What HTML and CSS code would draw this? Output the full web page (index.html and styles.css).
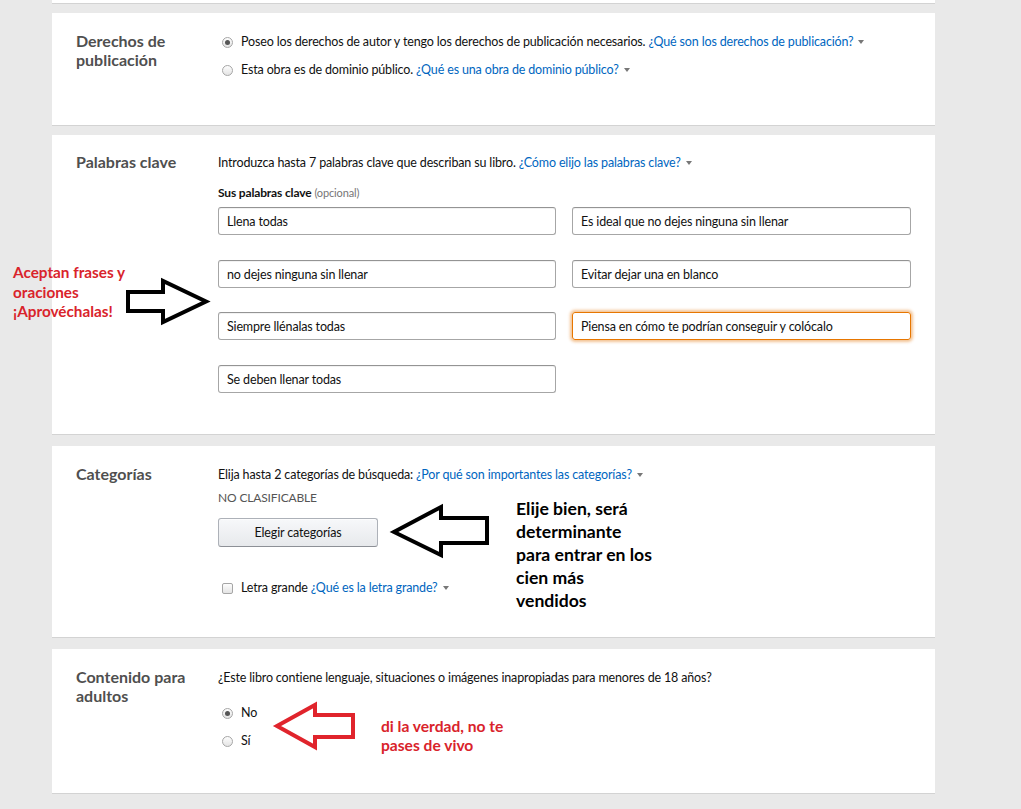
FILE: index.html
```html
<!DOCTYPE html>
<html lang="es">
<head>
<meta charset="utf-8">
<title>Detalles del libro</title>
<link rel="stylesheet" href="styles.css">
</head>
<body>
<div class="page">
  <div class="card stub"></div>

  <section class="card rights">
    <h2 class="label">Derechos de publicación</h2>
    <div class="content">
      <div class="choice"><span class="radio checked"></span><span>Poseo los derechos de autor y tengo los derechos de publicación necesarios. <a class="link">¿Qué son los derechos de publicación?</a><span class="caret"></span></span></div>
      <div class="choice gap8"><span class="radio"></span><span>Esta obra es de dominio público. <a class="link">¿Qué es una obra de dominio público?</a><span class="caret"></span></span></div>
    </div>
  </section>

  <section class="card keywords">
    <h2 class="label">Palabras clave</h2>
    <div class="content">
      <div class="line">Introduzca hasta 7 palabras clave que describan su libro. <a class="link">¿Cómo elijo las palabras clave?</a><span class="caret"></span></div>
      <div class="line sub"><b>Sus palabras clave</b> <span class="muted">(opcional)</span></div>
      <div class="kw-grid">
        <div class="input">Llena todas</div>
        <div class="input">Es ideal que no dejes ninguna sin llenar</div>
        <div class="input">no dejes ninguna sin llenar</div>
        <div class="input">Evitar dejar una en blanco</div>
        <div class="input">Siempre llénalas todas</div>
        <div class="input focus">Piensa en cómo te podrían conseguir y colócalo</div>
        <div class="input">Se deben llenar todas</div>
      </div>
    </div>
  </section>

  <section class="card categories">
    <h2 class="label">Categorías</h2>
    <div class="content">
      <div class="line">Elija hasta 2 categorías de búsqueda: <a class="link">¿Por qué son importantes las categorías?</a><span class="caret"></span></div>
      <div class="line muted-up">NO CLASIFICABLE</div>
      <button class="btn" type="button">Elegir categorías</button>
      <div class="choice large"><span class="check"></span><span>Letra grande <a class="link">¿Qué es la letra grande?</a><span class="caret"></span></span></div>
    </div>
  </section>

  <section class="card adult">
    <h2 class="label">Contenido para adultos</h2>
    <div class="content">
      <div class="line">¿Este libro contiene lenguaje, situaciones o imágenes inapropiadas para menores de 18 años?</div>
      <div class="choice no"><span class="radio checked"></span><span>No</span></div>
      <div class="choice gap8"><span class="radio"></span><span>Sí</span></div>
    </div>
  </section>

  <svg class="overlay" width="1021" height="809" viewBox="0 0 1021 809" aria-hidden="true">
    <polygon points="128,292 163,292 163,281 206,301.5 163,322 163,311 128,311" fill="none" stroke="#000" stroke-width="4" stroke-linejoin="miter"/>
    <polygon points="487,518 441,518 441,507 394,532 441,555 441,543 487,543" fill="none" stroke="#000" stroke-width="4" stroke-linejoin="miter"/>
    <polygon points="353,715 315,715 315,705 277,726 315,747 315,737 353,737" fill="none" stroke="#e0242c" stroke-width="4" stroke-linejoin="miter"/>
  </svg>

  <div class="note note-red note-kw">Aceptan frases y<br>oraciones<br>¡Aprovéchalas!</div>
  <div class="note note-black note-cat">Elije bien, será<br>determinante<br>para entrar en los<br>cien más<br>vendidos</div>
  <div class="note note-red note-adult">di la verdad, no te<br>pases de vivo</div>
</div>
</body>
</html>
```

FILE: styles.css
```css
html, body {
  margin: 0;
  padding: 0;
}
body {
  background: #e9e9e9;
  font-family: Lato, "Liberation Sans", Arial, sans-serif;
  font-size: 12.5px;
  letter-spacing: -0.15px;
  color: #111;
  width: 1021px;
  height: 809px;
  overflow: hidden;
}
.page {
  position: relative;
  width: 1021px;
  height: 809px;
  display: flex;
  flex-direction: column;
  align-items: flex-start;
}
.card {
  box-sizing: border-box;
  width: 883px;
  margin-left: 52px;
  background: #fff;
  border-bottom: 1px solid #d3d3d3;
  display: flex;
  padding: 18px 23px 0 24px;
}
.stub {
  height: 4px;
  padding: 0;
  margin-bottom: 9px;
}
.rights { height: 113px; margin-bottom: 9px; }
.keywords { height: 300px; margin-bottom: 11px; padding-top: 17px; }
.categories { height: 192px; margin-bottom: 11px; }
.adult { height: 145px; }

.label {
  margin: 0;
  width: 118px;
  margin-right: 24px;
  flex: none;
  font-size: 16px;
  font-weight: 700;
  letter-spacing: 0;
  line-height: 19px;
  color: #4f4f4f;
}
.content {
  flex: 1;
  line-height: 20px;
  padding-top: 1px;
}
.line { line-height: 20px; }
.sub { margin-top: 10px; font-size: 12px; }
.sub b { font-weight: 700; color: #111; }
.muted { color: #767676; font-size: 11px; }
.muted-up { margin-top: 3px; color: #555; font-size: 12px; }

.link {
  color: #0066c0;
  text-decoration: none;
  cursor: pointer;
}
.caret {
  display: inline-block;
  width: 0;
  height: 0;
  margin-left: 5px;
  vertical-align: 2px;
  border-left: 3px solid transparent;
  border-right: 3px solid transparent;
  border-top: 4px solid #777;
}

.choice {
  display: flex;
  align-items: center;
  line-height: 20px;
}
.gap8 { margin-top: 8px; }
.choice .radio, .choice .check { margin-left: 4px; margin-right: 8px; }
.no { margin-top: 15px; }
.large { margin-top: 31px; }

.radio {
  box-sizing: border-box;
  flex: none;
  width: 11px;
  height: 11px;
  border-radius: 50%;
  border: 1px solid #a6a6a6;
  background: linear-gradient(#fdfdfd, #e4e4e4);
  position: relative;
}
.radio.checked::after {
  content: "";
  position: absolute;
  left: 2px;
  top: 2px;
  width: 5px;
  height: 5px;
  border-radius: 50%;
  background: #555;
}
.check {
  box-sizing: border-box;
  flex: none;
  width: 11px;
  height: 11px;
  border-radius: 2px;
  border: 1px solid #a6a6a6;
  background: linear-gradient(#fdfdfd, #e4e4e4);
}

.kw-grid {
  margin-top: 4px;
  display: grid;
  grid-template-columns: 338px 339px;
  column-gap: 16px;
  row-gap: 24.5px;
}
.input {
  box-sizing: border-box;
  height: 28px;
  border: 1px solid #a6a6a6;
  border-top-color: #949494;
  border-radius: 3px;
  box-shadow: inset 0 1px 0 rgba(0,0,0,0.05);
  padding: 0 8px;
  line-height: 27px;
  font-size: 12.5px;
  color: #111;
  white-space: nowrap;
  overflow: hidden;
}
.input.focus {
  border-color: #e77600;
  box-shadow: 0 0 3px 2px rgba(228, 121, 17, 0.45);
}

.btn {
  display: block;
  box-sizing: border-box;
  margin-top: 10px;
  width: 160px;
  height: 29px;
  border: 1px solid #adb1b8;
  border-bottom-color: #8d9096;
  border-radius: 3px;
  background: linear-gradient(#f7f8fa, #e7e9ec);
  box-shadow: inset 0 1px 0 rgba(255,255,255,0.6);
  font-family: Lato, "Liberation Sans", Arial, sans-serif;
  font-size: 12.5px;
  letter-spacing: -0.15px;
  color: #111;
  padding: 0;
}

.overlay {
  position: absolute;
  left: 0;
  top: 0;
  pointer-events: none;
}
.note {
  position: absolute;
  font-weight: 700;
  letter-spacing: 0;
  font-family: Lato, "Open Sans", sans-serif;
}
.note-red { color: #d9232b; }
.note-kw {
  left: 13px;
  top: 263px;
  font-size: 15.3px;
  line-height: 19.5px;
}
.note-black {
  color: #000;
  left: 516px;
  top: 497px;
  font-size: 17.6px;
  line-height: 23px;
}
.note-adult {
  left: 381px;
  top: 717px;
  font-size: 15.6px;
  line-height: 19px;
}
```
